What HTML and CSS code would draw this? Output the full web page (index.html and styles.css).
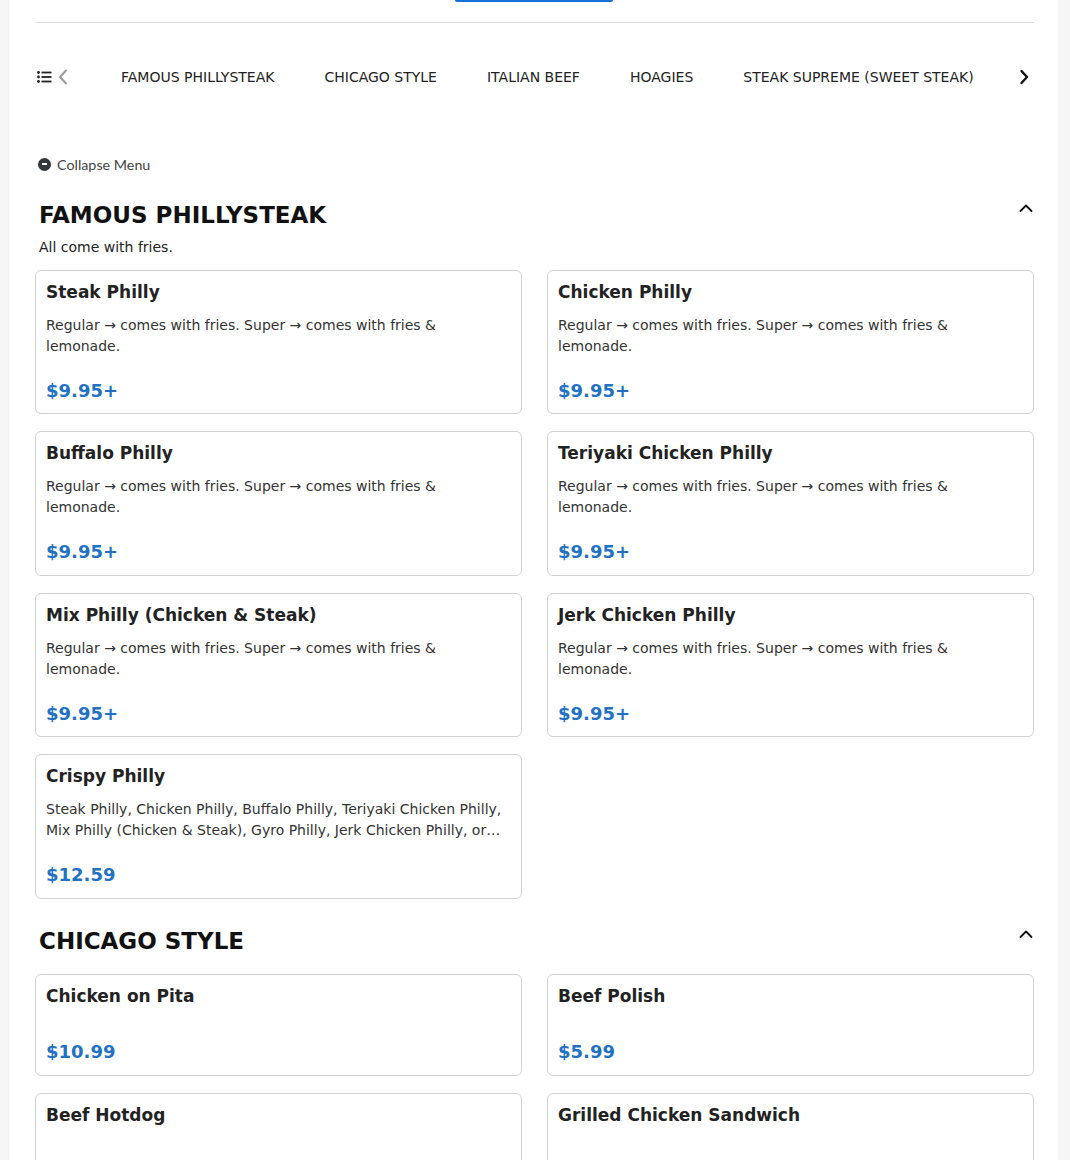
FILE: index.html
```html
<!DOCTYPE html>
<html lang="en">
<head>
<meta charset="utf-8">
<title>Menu</title>
<link rel="stylesheet" href="styles.css">
</head>
<body>
<div class="page">
  <div class="topbar">
    <div class="active-bar"></div>
  </div>
  <div class="divider"></div>

  <nav class="catnav">
    <span class="nav-icon list-icon">
      <svg width="15" height="12" viewBox="0 0 15 12"><circle cx="1.5" cy="1.5" r="1.4" fill="#222"/><circle cx="1.5" cy="6" r="1.4" fill="#222"/><circle cx="1.5" cy="10.5" r="1.4" fill="#222"/><rect x="4.5" y="0.6" width="10" height="1.8" fill="#222"/><rect x="4.5" y="5.1" width="10" height="1.8" fill="#222"/><rect x="4.5" y="9.6" width="10" height="1.8" fill="#222"/></svg>
    </span>
    <span class="nav-icon chev-left">
      <svg width="10" height="16" viewBox="0 0 10 16"><path d="M8 1.5 L2 8 L8 14.5" fill="none" stroke="#9a9a9a" stroke-width="2" stroke-linecap="round" stroke-linejoin="round"/></svg>
    </span>
    <ul class="cat-list">
      <li>FAMOUS PHILLYSTEAK</li>
      <li>CHICAGO STYLE</li>
      <li>ITALIAN BEEF</li>
      <li>HOAGIES</li>
      <li>STEAK SUPREME (SWEET STEAK)</li>
    </ul>
    <span class="nav-icon chev-right">
      <svg width="10" height="16" viewBox="0 0 10 16"><path d="M2.5 2 L8 8 L2.5 14" fill="none" stroke="#111" stroke-width="2.4" stroke-linecap="round" stroke-linejoin="round"/></svg>
    </span>
  </nav>

  <div class="collapse">
    <span class="collapse-icon"></span>
    <span class="collapse-text">Collapse Menu</span>
  </div>

  <section class="menu-section has-desc">
    <div class="section-head">
      <h2>FAMOUS PHILLYSTEAK</h2>
      <svg class="chev-up" width="14" height="10" viewBox="0 0 14 10"><path d="M1.5 8 L7 2.5 L12.5 8" fill="none" stroke="#111" stroke-width="1.8" stroke-linecap="round" stroke-linejoin="round"/></svg>
    </div>
    <p class="section-desc">All come with fries.</p>
    <div class="grid">
      <div class="card"><h3>Steak Philly</h3><p class="desc">Regular → comes with fries. Super → comes with fries &amp; lemonade.</p><div class="price">$9.95+</div></div>
      <div class="card"><h3>Chicken Philly</h3><p class="desc">Regular → comes with fries. Super → comes with fries &amp; lemonade.</p><div class="price">$9.95+</div></div>
      <div class="card"><h3>Buffalo Philly</h3><p class="desc">Regular → comes with fries. Super → comes with fries &amp; lemonade.</p><div class="price">$9.95+</div></div>
      <div class="card"><h3>Teriyaki Chicken Philly</h3><p class="desc">Regular → comes with fries. Super → comes with fries &amp; lemonade.</p><div class="price">$9.95+</div></div>
      <div class="card"><h3>Mix Philly (Chicken &amp; Steak)</h3><p class="desc">Regular → comes with fries. Super → comes with fries &amp; lemonade.</p><div class="price">$9.95+</div></div>
      <div class="card"><h3>Jerk Chicken Philly</h3><p class="desc">Regular → comes with fries. Super → comes with fries &amp; lemonade.</p><div class="price">$9.95+</div></div>
      <div class="card"><h3>Crispy Philly</h3><p class="desc">Steak Philly, Chicken Philly, Buffalo Philly, Teriyaki Chicken Philly, Mix Philly (Chicken &amp; Steak), Gyro Philly, Jerk Chicken Philly, or Crispy Chicken Philly with fries.</p><div class="price">$12.59</div></div>
    </div>
  </section>

  <section class="menu-section">
    <div class="section-head">
      <h2>CHICAGO STYLE</h2>
      <svg class="chev-up" width="14" height="10" viewBox="0 0 14 10"><path d="M1.5 8 L7 2.5 L12.5 8" fill="none" stroke="#111" stroke-width="1.8" stroke-linecap="round" stroke-linejoin="round"/></svg>
    </div>
    <div class="grid">
      <div class="card"><h3>Chicken on Pita</h3><div class="price">$10.99</div></div>
      <div class="card"><h3>Beef Polish</h3><div class="price">$5.99</div></div>
      <div class="card"><h3>Beef Hotdog</h3><div class="price">$4.99</div></div>
      <div class="card"><h3>Grilled Chicken Sandwich</h3><div class="price">$9.99</div></div>
    </div>
  </section>
</div>
</body>
</html>
```

FILE: styles.css
```css
html, body {
  margin: 0;
  padding: 0;
}
body {
  background: #f6f6f6;
  font-family: "DejaVu Sans", Verdana, sans-serif;
  color: #222;
}
.page {
  background: #fff;
  margin: 0 12px 0 10px;
  padding: 0 24px 40px 25px;
  min-height: 1200px;
}
.topbar {
  height: 22px;
  display: flex;
  justify-content: center;
}
.active-bar {
  width: 158px;
  height: 2px;
  background: #1470d6;
  border-radius: 0 0 3px 3px;
  margin-right: 2px;
}
.divider {
  height: 1px;
  background: #dedede;
  margin-left: 1px;
}
.catnav {
  display: flex;
  align-items: center;
  height: 40px;
  margin-top: 34px;
}
.nav-icon {
  display: flex;
  align-items: center;
}
.list-icon {
  margin-left: 2px;
}
.chev-left {
  margin-left: 6px;
}
.cat-list {
  list-style: none;
  margin: 0 0 0 53px;
  padding: 0;
  display: flex;
  gap: 50px;
  flex: 1;
  font-size: 14px;
  color: #222;
  white-space: nowrap;
  overflow: hidden;
}
.chev-right {
  margin-right: 5px;
}
.collapse {
  display: flex;
  align-items: center;
  gap: 6px;
  margin-top: 57px;
  margin-left: 3px;
  height: 20px;
}
.collapse-icon {
  width: 13px;
  height: 13px;
  border-radius: 50%;
  background: #33363b;
  position: relative;
}
.collapse-icon::after {
  content: "";
  position: absolute;
  left: 4px;
  top: 5.5px;
  width: 5px;
  height: 2px;
  background: #fff;
}
.collapse-text {
  font-family: Lato, "Open Sans", sans-serif;
  font-size: 14.3px;
  color: #444;
}
.menu-section {
  margin-top: 26px;
}
.menu-section + .menu-section {
  margin-top: 27px;
}
.section-head {
  display: flex;
  align-items: center;
  justify-content: space-between;
  padding-left: 4px;
  height: 30px;
}
.section-head h2 {
  margin: 0;
  font-size: 23px;
  font-weight: bold;
  color: #111;
  line-height: 30px;
}
.chev-up {
  margin-right: 1px;
  margin-top: -14px;
}
.section-desc {
  margin: 7px 0 0 4px;
  font-size: 14px;
  line-height: 20px;
  color: #222;
}
.grid {
  display: grid;
  grid-template-columns: 1fr 1fr;
  column-gap: 25px;
  row-gap: 17px;
  margin-top: 18px;
}
.has-desc .grid {
  margin-top: 13px;
}
.card {
  border: 1px solid #d2d2d2;
  border-radius: 6px;
  padding: 10px;
  display: flex;
  flex-direction: column;
}
.card h3 {
  margin: 0;
  font-size: 17px;
  line-height: 22px;
  font-weight: bold;
  color: #222;
}
.desc {
  margin: 12px 0 0;
  font-size: 14px;
  line-height: 21px;
  color: #333;
  display: -webkit-box;
  -webkit-line-clamp: 2;
  -webkit-box-orient: vertical;
  overflow: hidden;
}
.price {
  margin-top: 21px;
  font-size: 18px;
  line-height: 25.4px;
  font-weight: bold;
  color: #2271c2;
}
.card h3 + .price {
  margin-top: 32.6px;
}
```
